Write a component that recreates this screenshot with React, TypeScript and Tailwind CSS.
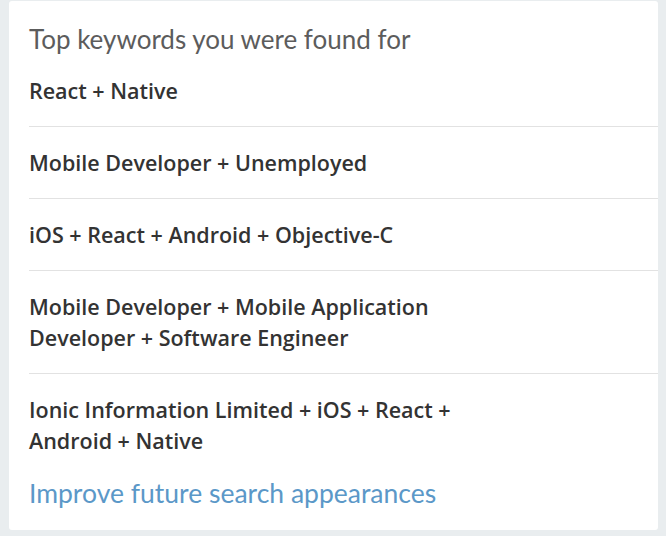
import React from 'react';

const keywords: string[] = [
  'React + Native',
  'Mobile Developer + Unemployed',
  'iOS + React + Android + Objective-C',
  'Mobile Developer + Mobile Application Developer + Software Engineer',
  'Ionic Information Limited + iOS + React + Android + Native',
];

export default function App() {
  return (
    <div className="h-[536px] w-[666px] bg-[#e9edef] pt-px pl-[9px] pr-2 font-['Lato','Liberation_Sans',sans-serif]">
      <div className="h-[529px] rounded-[3px] bg-white pt-[22px] pb-[21px]">
        <h2 className="px-5 text-[26px] leading-[32px] text-[#5c5c5c]">Top keywords you were found for</h2>
        <ul className="ml-5">
          {keywords.map((k, i) => (
            <li
              key={k}
              className={
                i < keywords.length - 1
                  ? 'border-b border-[#e2e2e2] pt-5 pb-[20px]'
                  : 'pt-5 pb-[21px]'
              }
            >
              <span className="block max-w-[480px] font-['Open_Sans',sans-serif] text-[21.5px] leading-[31px] font-semibold text-[#333333]">
                {k}
              </span>
            </li>
          ))}
        </ul>
        <a href="#" className="block px-5 text-[26.5px] leading-[32px] text-[#5b98c8]">
          Improve future search appearances
        </a>
      </div>
    </div>
  );
}
